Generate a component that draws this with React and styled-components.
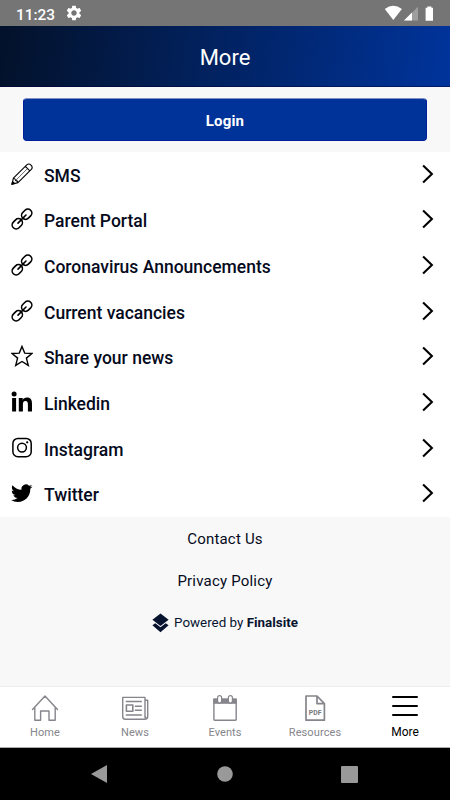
import React from 'react';
import styled, { createGlobalStyle } from 'styled-components';

const GlobalStyle = createGlobalStyle`
  * {
    box-sizing: border-box;
  }

  body {
    margin: 0;
    font-family: Roboto, 'Liberation Sans', sans-serif;
    color: #050a1c;
    background: #f8f8f8;
  }

  svg {
    display: block;
    flex: none;
  }
`;

const Screen = styled.div`
  width: 450px;
  height: 800px;
  display: flex;
  flex-direction: column;
  overflow: hidden;
`;

const StatusBar = styled.div`
  height: 26px;
  flex: none;
  display: flex;
  align-items: center;
  padding: 0 15px 0 16px;
  background: #757575;
  color: white;
`;

const Clock = styled.span`
  width: 50px;
  font-size: 15.4px;
  font-weight: 500;
  line-height: 22px;
  padding-top: 3px;
`;

const StatusIcons = styled.div`
  display: flex;
  align-items: center;
  margin-left: auto;
`;

const Header = styled.header`
  height: 61px;
  flex: none;
  display: flex;
  align-items: center;
  justify-content: center;
  padding-top: 3px;
  background: linear-gradient(98deg, #03122c 2%, #003399 98%);
  border-bottom: 1px solid rgba(0, 0, 60, 0.5);
  color: white;
  font-size: 22px;
`;

const LoginPanel = styled.div`
  height: 65px;
  flex: none;
  padding: 11px 23px 0;
  background: #f8f8f8;
`;

const LoginButton = styled.button`
  display: block;
  width: 100%;
  height: 43px;
  padding: 2px 0 0;
  border: 1px solid #00209a;
  border-top-color: #8190c4;
  border-radius: 4px;
  background: #003399;
  color: white;
  font-family: inherit;
  font-size: 15px;
  font-weight: 700;
  letter-spacing: 0.15px;
  cursor: pointer;
`;

const Menu = styled.nav`
  height: 365px;
  flex: none;
  display: flex;
  flex-direction: column;
  background: white;
`;

const MenuRow = styled.div`
  flex: 1;
  display: flex;
  align-items: center;
  padding: 0 16px 2px 11px;

  span {
    flex: 1;
    margin-left: 11px;
    padding-top: 4px;
    font-size: 17.5px;
    font-weight: 500;
    line-height: 22px;
  }
`;

const Footer = styled.footer`
  flex: 1;
  display: flex;
  flex-direction: column;
  align-items: center;
  padding-top: 11px;
  background: #f8f8f8;
`;

const FooterLink = styled.div`
  height: 42px;
  line-height: 22px;
  font-size: 15px;
  letter-spacing: 0.2px;
`;

const Powered = styled.div`
  display: flex;
  align-items: center;
  gap: 5px;
  height: 21px;
  font-size: 13.4px;
  color: #07132f;
`;

const TabBar = styled.nav`
  height: 62px;
  flex: none;
  display: flex;
  background: white;
  border-top: 1px solid #ededed;
  border-bottom: 1px solid #aaa;
`;

const Tab = styled.div`
  flex: 1;
  display: flex;
  flex-direction: column;
  align-items: center;
  padding-top: 7px;
  color: ${(props) => (props.$active ? '#000' : '#85858b')};
  font-size: ${(props) => (props.$active ? '12px' : '11px')};
  letter-spacing: ${(props) => (props.$active ? '0' : '0.1px')};
  line-height: 14px;

  svg {
    margin-bottom: ${(props) => (props.$active ? '3px' : '4px')};
  }
`;

const SystemNav = styled.div`
  height: 52px;
  flex: none;
  display: flex;
  align-items: center;
  justify-content: space-between;
  padding: 0 92px 0 91px;
  background: black;
`;

const Icon = ({ size = 22, children, ...rest }) => (
  <svg width={size} height={size} viewBox="0 0 22 22" fill="none" stroke="#000" strokeWidth="1.4" strokeLinejoin="round" strokeLinecap="round" {...rest}>
    {children}
  </svg>
);

const PencilIcon = () => (
  <Icon strokeWidth="1.1">
    <path d="M0.9 21.3 L2.4 15.2 L15.8 1.9 Q17.8 0 20 2.1 Q22.2 4.3 20.3 6.4 L7 19.6 Z M2.4 15.2 Q4 15 4.6 17.4 Q7 18 7 19.6 M14.4 3.3 L18.8 7.8" />
    <path d="M5 17.1 L16 6.1" strokeWidth="0.6" />
    <path d="M0.9 21.3 L1.6 18.6 L3.6 20.5 Z" fill="#000" />
  </Icon>
);

const LinkIcon = () => (
  <Icon strokeWidth="1.6">
    <rect x="-5.6" y="-4" width="11.2" height="8" rx="4" transform="translate(15.7 6.2) rotate(-45)" />
    <rect x="-5.6" y="-4" width="11.2" height="8" rx="4" transform="translate(6.3 15.8) rotate(-45)" />
    <path d="M7 15.1 L15 7" />
  </Icon>
);

const StarIcon = () => (
  <Icon strokeWidth="1.4" strokeLinejoin="miter">
    <path d="M11 1.4 L13.7 8.1 L21 8.5 L15.4 13.1 L17.3 20.4 L11 16.5 L4.7 20.4 L6.6 13.1 L1 8.5 L8.3 8.1 Z" />
  </Icon>
);

const LinkedinIcon = () => (
  <Icon fill="#000" stroke="none">
    <circle cx="3.1" cy="2.9" r="2.5" />
    <path d="M1.1 7 H5.1 V20.6 H1.1 Z M7.8 7 H11.7 V8.9 C12.4 7.5 13.9 6.6 15.9 6.6 C20 6.6 21 9.3 21 13 V20.6 H16.9 V13.8 C16.9 11.9 16.7 10.1 14.5 10.1 C12.3 10.1 11.9 11.8 11.9 13.7 V20.6 H7.8 Z" />
  </Icon>
);

const InstagramIcon = () => (
  <Icon strokeWidth="1.5">
    <rect x="1.9" y="1.4" width="18.3" height="18.3" rx="5" />
    <circle cx="11" cy="10.6" r="4.4" />
    <circle cx="16.2" cy="5.3" r="1.15" fill="#000" stroke="none" />
  </Icon>
);

const TwitterIcon = () => (
  <svg width="22" height="22" viewBox="0 -0.5 24.6 24.6" fill="#000">
    <path d="M23.95 4.57a10 10 0 0 1-2.82.77 4.96 4.96 0 0 0 2.16-2.72c-.95.55-2 .95-3.13 1.18a4.92 4.92 0 0 0-8.38 4.48C7.69 8.1 4.07 6.13 1.64 3.16a4.82 4.82 0 0 0-.67 2.48c0 1.7.87 3.2 2.19 4.1a4.9 4.9 0 0 1-2.23-.62v.06a4.93 4.93 0 0 0 3.95 4.83 5 5 0 0 1-2.21.08 4.94 4.94 0 0 0 4.6 3.42A9.87 9.87 0 0 1 0 19.54a13.99 13.99 0 0 0 7.56 2.21c9.05 0 14-7.5 14-13.98 0-.21 0-.42-.02-.63a9.94 9.94 0 0 0 2.46-2.55z" />
  </svg>
);

const Chevron = () => (
  <svg width="12" height="20" viewBox="0 0 12 20" fill="none" stroke="#000" strokeWidth="2.1">
    <path d="M1.1 1.4 L9.9 10 L1.1 18.6" />
  </svg>
);

const GearIcon = () => (
  <svg width="16" height="16" viewBox="1.5 1.5 21 21" fill="white">
    <path d="M19.14 12.94c.04-.3.06-.61.06-.94 0-.32-.02-.64-.07-.94l2.03-1.58c.18-.14.23-.41.12-.61l-1.92-3.32c-.12-.22-.37-.29-.59-.22l-2.39.96c-.5-.38-1.03-.7-1.62-.94l-.36-2.54c-.04-.24-.24-.41-.48-.41h-3.84c-.24 0-.43.17-.47.41l-.36 2.54c-.59.24-1.13.57-1.62.94l-2.39-.96c-.22-.08-.47 0-.59.22L2.74 8.87c-.12.21-.08.47.12.61l2.03 1.58c-.05.3-.09.63-.09.94s.02.64.07.94l-2.03 1.58c-.18.14-.23.41-.12.61l1.92 3.32c.12.22.37.29.59.22l2.39-.96c.5.38 1.03.7 1.62.94l.36 2.54c.05.24.24.41.48.41h3.84c.24 0 .44-.17.47-.41l.36-2.54c.59-.24 1.13-.56 1.62-.94l2.39.96c.22.08.47 0 .59-.22l1.92-3.32c.12-.22.07-.47-.12-.61l-2.01-1.58zM12 15.6c-1.98 0-3.6-1.62-3.6-3.6s1.62-3.6 3.6-3.6 3.6 1.62 3.6 3.6-1.62 3.6-3.6 3.6z" />
  </svg>
);

const SignalIcons = () => (
  <svg width="51" height="16" viewBox="0 -0.4 51 16" fill="white">
    <path d="M0.8 3.6 Q9.2 -2.8 17.9 3.6 L9.3 14.6 Z" />
    <path d="M34 1.4 V15 H20 Z" opacity="0.3" />
    <path d="M28 7.2 V15 H20 Z" />
    <path d="M43.4 1 H47.4 V2.3 H49 V15.4 H41.6 V2.3 H43.4 Z" />
  </svg>
);

const FinalsiteLogo = () => (
  <svg width="17" height="20" viewBox="0 0 17 20" fill="#07132f">
    <path d="M8.5 0.4 L16.6 6.8 L8.5 13.1 L0.4 6.8 Z" />
    <path d="M0.4 12.3 L3.3 10.2 L8.5 14.2 L13.7 10.2 L16.6 12.3 L8.5 19.2 Z" />
  </svg>
);

const TabIcon = ({ children }) => (
  <svg width="28" height="28" viewBox="0 0 28 28" fill="none" stroke="#85858b" strokeWidth="1.4" strokeLinejoin="round" strokeLinecap="round">
    {children}
  </svg>
);

const HomeIcon = () => (
  <TabIcon>
    <path d="M1.5 15.4 L14 1.9 L26.5 15.4 M3.8 13.2 V26.2 H9.6 V17 H18 V26.2 H24.2 V13.2" />
  </TabIcon>
);

const NewsIcon = () => (
  <TabIcon>
    <path d="M24 23.6 V3.4 H1.7 V22.4 Q1.7 25.2 4.4 25.2 H24.3 Q26.7 25 26.7 22.5 V6.2 H24 V21.8 Q24.2 23.4 25.2 24" />
    <path d="M5.3 7.5 H20.3 M14.3 12.3 H20.3 M14.3 16.3 H20.3 M5.3 21 H20.3" />
    <rect x="5.4" y="11" width="6.4" height="6.2" strokeWidth="1.6" />
  </TabIcon>
);

const EventsIcon = () => (
  <TabIcon>
    <path d="M2.2 4.6 H25.8 V9.8 H2.2 Z" fill="#85858b" stroke="none" />
    <rect x="2.9" y="5.2" width="22.3" height="21.1" rx="0.7" />
    <rect x="6.6" y="1.7" width="4" height="7.4" rx="2" fill="white" strokeWidth="1.2" />
    <rect x="17.4" y="1.7" width="4" height="7.4" rx="2" fill="white" strokeWidth="1.2" />
  </TabIcon>
);

const PdfIcon = () => (
  <TabIcon>
    <path d="M5 2 H16 L23.4 9.6 V26.2 H5 Z M16 2 V9.6 H23.4" strokeWidth="1.7" />
    <text x="14.2" y="20.9" textAnchor="middle" fill="#77777d" stroke="none" fontSize="6.9" fontWeight="700" letterSpacing="0.1">PDF</text>
  </TabIcon>
);

const HamburgerIcon = () => (
  <svg width="28" height="28" viewBox="0 0 28 28" stroke="#000" strokeWidth="2" strokeLinecap="round">
    <path d="M2 3 H26 M2 12 H26 M2 21 H26" />
  </svg>
);

const menuItems = [
  { label: 'SMS', icon: PencilIcon },
  { label: 'Parent Portal', icon: LinkIcon },
  { label: 'Coronavirus Announcements', icon: LinkIcon },
  { label: 'Current vacancies', icon: LinkIcon },
  { label: 'Share your news', icon: StarIcon },
  { label: 'Linkedin', icon: LinkedinIcon },
  { label: 'Instagram', icon: InstagramIcon },
  { label: 'Twitter', icon: TwitterIcon },
];

const tabs = [
  { label: 'Home', icon: HomeIcon },
  { label: 'News', icon: NewsIcon },
  { label: 'Events', icon: EventsIcon },
  { label: 'Resources', icon: PdfIcon },
  { label: 'More', icon: HamburgerIcon, active: true },
];

const App = () => (
  <>
    <GlobalStyle />
    <Screen>
      <StatusBar>
        <Clock>11:23</Clock>
        <GearIcon />
        <StatusIcons>
          <SignalIcons />
        </StatusIcons>
      </StatusBar>

      <Header>More</Header>

      <LoginPanel>
        <LoginButton>Login</LoginButton>
      </LoginPanel>

      <Menu>
        {menuItems.map(({ label, icon: ItemIcon }) => (
          <MenuRow key={label}>
            <ItemIcon />
            <span>{label}</span>
            <Chevron />
          </MenuRow>
        ))}
      </Menu>

      <Footer>
        <FooterLink>Contact Us</FooterLink>
        <FooterLink>Privacy Policy</FooterLink>
        <Powered>
          <FinalsiteLogo />
          <span>Powered by <b>Finalsite</b></span>
        </Powered>
      </Footer>

      <TabBar>
        {tabs.map(({ label, icon: ItemIcon, active }) => (
          <Tab key={label} $active={active}>
            <ItemIcon />
            {label}
          </Tab>
        ))}
      </TabBar>

      {/* Android back / home / recents */}
      <SystemNav>
        <svg width="16" height="18" viewBox="0 0 16 18" fill="#999">
          <path d="M0 9 L16 0 V18 Z" />
        </svg>
        <svg width="17" height="16" viewBox="0 0 17 16" fill="#999">
          <circle cx="9" cy="8" r="7.8" />
        </svg>
        <svg width="17" height="17" viewBox="0 0 17 17" fill="#999">
          <rect width="17" height="17" rx="1" />
        </svg>
      </SystemNav>
    </Screen>
  </>
);

export default App;
